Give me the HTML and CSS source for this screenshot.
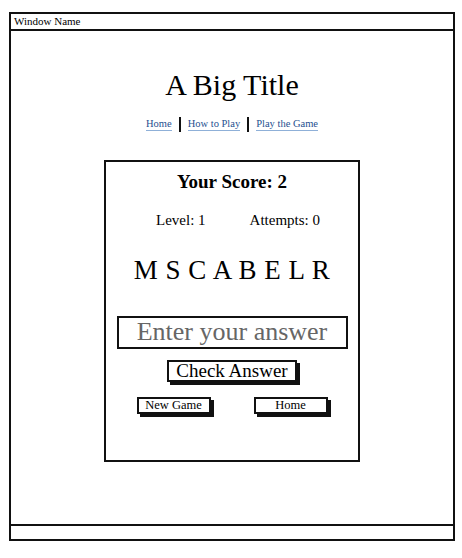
FILE: index.html
```html
<!DOCTYPE html>
<html>
<head>
<meta charset="utf-8">
<link rel="stylesheet" href="styles.css">
</head>
<body>
<div class="window">
  <div class="titlebar">Window Name</div>
  <div class="content">
    <h1 class="title">A Big Title</h1>
    <nav class="nav">
      <a href="#" class="link">Home</a>
      <span class="sep"></span>
      <a href="#" class="link">How to Play</a>
      <span class="sep"></span>
      <a href="#" class="link">Play the Game</a>
    </nav>
    <div class="card">
      <div class="score">Your Score: 2</div>
      <div class="stats">
        <span>Level: 1</span>
        <span>Attempts: 0</span>
      </div>
      <div class="letters">M S C A B E L R</div>
      <div class="answer">Enter your answer</div>
      <button class="btn btn-check">Check Answer</button>
      <div class="actions">
        <button class="btn btn-small">New Game</button>
        <button class="btn btn-small">Home</button>
      </div>
    </div>
  </div>
  <div class="statusbar"></div>
</div>
</body>
</html>
```
FILE: styles.css
```css
html, body {
  margin: 0;
  padding: 0;
  background: #fff;
}
body {
  font-family: "Liberation Serif", "DejaVu Serif", serif;
  color: #000;
}
.window {
  margin: 12px 0 0 9px;
  width: 446px;
  height: 529px;
  box-sizing: border-box;
  border: 2px solid #111;
  display: flex;
  flex-direction: column;
}
.titlebar {
  height: 15px;
  border-bottom: 2px solid #111;
  font-size: 11px;
  line-height: 15px;
  padding-left: 3px;
}
.content {
  flex: 1;
  display: flex;
  flex-direction: column;
  align-items: center;
}
.title {
  margin: 37px 0 0;
  font-size: 30px;
  font-weight: normal;
  line-height: 34px;
}
.nav {
  display: flex;
  align-items: center;
  gap: 7px;
  margin-top: 15px;
  font-size: 10.5px;
}
.link {
  color: #1f4f8f;
  text-decoration: none;
  border-bottom: 1px solid #8fb0d8;
  line-height: 12px;
}
.sep {
  width: 2px;
  height: 15px;
  background: #111;
}
.card {
  margin-top: 28px;
  width: 256px;
  height: 302px;
  box-sizing: border-box;
  border: 2px solid #111;
  display: flex;
  flex-direction: column;
  align-items: center;
}
.score {
  margin-top: 10px;
  font-size: 19px;
  font-weight: bold;
  line-height: 20px;
}
.stats {
  margin-top: 20px;
  display: flex;
  gap: 44px;
  font-size: 15px;
  line-height: 17px;
  padding-left: 12px;
}
.letters {
  margin-top: 26px;
  font-size: 27px;
  letter-spacing: 0.5px;
  line-height: 30px;
}
.answer {
  margin-top: 31px;
  width: 231px;
  height: 33px;
  box-sizing: border-box;
  border: 2px solid #111;
  color: #666;
  font-size: 26px;
  line-height: 28px;
  text-align: center;
}
.btn {
  font-family: "Liberation Serif", "DejaVu Serif", serif;
  background: #fff;
  color: #000;
  border: 2px solid #111;
  box-shadow: 3px 3px 0 #111;
  padding: 0;
  box-sizing: border-box;
}
.btn-check {
  margin-top: 11px;
  width: 130px;
  height: 22px;
  font-size: 19px;
  line-height: 18px;
}
.actions {
  margin-top: 15px;
  display: flex;
  gap: 43px;
}
.btn-small {
  width: 74px;
  height: 17px;
  font-size: 12.5px;
  line-height: 13px;
}
.statusbar {
  margin-top: auto;
  height: 13px;
  border-top: 2px solid #111;
}
```
